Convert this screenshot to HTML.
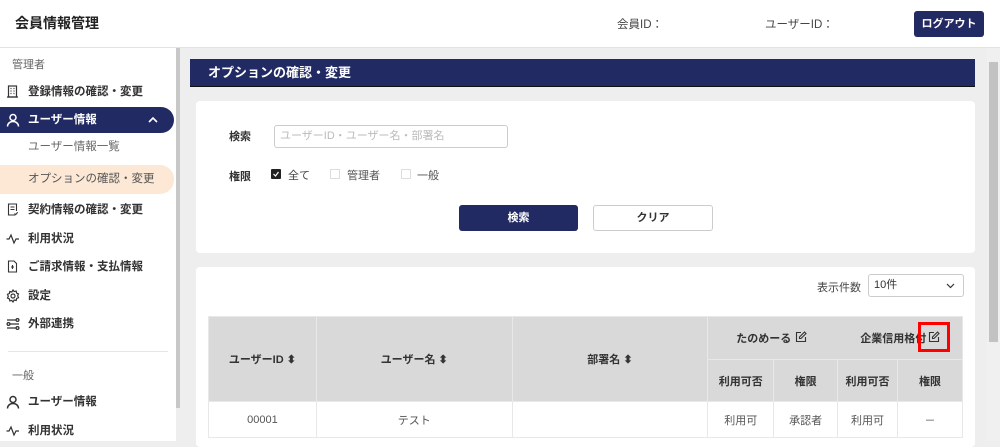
<!DOCTYPE html>
<html><head><meta charset="utf-8"><style>
*{box-sizing:border-box;margin:0;padding:0}
body{width:1000px;height:441px;overflow:hidden;background:#eeeeee;font-family:"Liberation Sans","Noto Sans CJK JP",sans-serif;color:#333;position:relative}
.abs{position:absolute}
.hdr{left:0;top:0;width:1000px;height:48px;background:#fff;border-bottom:1px solid #e2e2e2}
.side{left:0;top:48px;width:176px;height:393px;background:#fff}
.sb{left:176px;top:48px;width:4px;height:360px;background:#c8c8c8}
.it{position:absolute;left:0;width:174px;height:26px;font-size:11.5px;font-weight:bold;line-height:26px;padding-left:28px;color:#333}
.it svg{position:absolute;left:6px;top:6px}
.sub{font-weight:normal;color:#666;padding-left:28px}
.lbl{position:absolute;left:12px;font-size:11px;color:#666}
.card{background:#fff;border-radius:4px}
table{border-collapse:collapse;font-size:11px}
td,th{border:1px solid #e8e8e8;text-align:center}
th{background:#d9d9d9;font-weight:bold;color:#333}
td{color:#555;height:36px}
</style></head><body>
<div class="abs hdr">
<div class="abs" style="left:15px;top:13px;font-size:14px;font-weight:bold;color:#222">会員情報管理</div>
<div class="abs" style="left:617px;top:16px;font-size:11.5px;color:#444">会員ID：</div>
<div class="abs" style="left:765px;top:16px;font-size:11.5px;color:#444">ユーザーID：</div>
<div class="abs" style="left:914px;top:11px;width:70px;height:26px;background:#222a63;border-radius:3px;color:#fff;font-size:11px;font-weight:bold;text-align:center;line-height:26px">ログアウト</div>
</div>
<div class="abs side">
<div class="lbl" style="top:8px">管理者</div>
<div class="it" style="top:31px"><svg width="13" height="13" viewBox="0 0 13 13" fill="none" stroke="#333" stroke-width="1.2"><rect x="2.5" y="1" width="8" height="11"/><path d="M1 12h11M4.5 3.5h1M7.5 3.5h1M4.5 6h1M7.5 6h1M4.5 8.5h1M7.5 8.5h1"/></svg>登録情報の確認・変更</div>
<div class="it" style="top:59px;background:#222a63;color:#fff;border-radius:0 13px 13px 0"><svg width="14" height="14" viewBox="0 0 14 14" fill="none" stroke="#fff" stroke-width="1.5"><circle cx="7" cy="4.5" r="3"/><path d="M1.5 13.5c0-3 2.5-5 5.5-5s5.5 2 5.5 5"/></svg>ユーザー情報<svg style="left:148px;top:9px" width="10" height="8" viewBox="0 0 10 8" fill="none" stroke="#fff" stroke-width="1.6"><path d="M1 6l4-4 4 4"/></svg></div>
<div class="it sub" style="top:86px">ユーザー情報一覧</div>
<div class="it sub" style="top:117px;height:29px;line-height:29px;background:#fde8d5;border-radius:0 14px 14px 0;color:#555">オプションの確認・変更</div>
<div class="it" style="top:149px"><svg width="13" height="13" viewBox="0 0 13 13" fill="none" stroke="#333" stroke-width="1.1"><path d="M9 12H2.5V1h8v7"/><path d="M4.5 4h4M4.5 6.5h4M8.5 10.5l1.2 1.2 2-2.5"/></svg>契約情報の確認・変更</div>
<div class="it" style="top:178px"><svg width="14" height="13" viewBox="0 0 14 13" fill="none" stroke="#333" stroke-width="1.2"><path d="M0.5 7h2.5l2-4 3 8 2-4h3"/></svg>利用状況</div>
<div class="it" style="top:206px"><svg width="13" height="13" viewBox="0 0 13 13" fill="none" stroke="#333" stroke-width="1.1"><path d="M2.5 1h5.5l2.5 2.5V12h-8z"/><path d="M6.5 5v4M5 7h3"/></svg>ご請求情報・支払情報</div>
<div class="it" style="top:235px"><svg width="14" height="14" viewBox="0 0 14 14" fill="none" stroke="#333" stroke-width="1.2"><circle cx="7" cy="7" r="2"/><path d="M7 1l1.2 1.6 2-.5.4 2 1.9.8-.8 1.9.8 1.9-1.9.8-.4 2-2-.5L7 13l-1.2-1.6-2 .5-.4-2-1.9-.8.8-1.9-.8-1.9 1.9-.8.4-2 2 .5z"/></svg>設定</div>
<div class="it" style="top:263px"><svg width="14" height="14" viewBox="0 0 14 14" fill="none" stroke="#333" stroke-width="1.3"><path d="M1 3h9M4 7h9M1 11h9"/><circle cx="11.5" cy="3" r="1.4"/><circle cx="2.5" cy="7" r="1.4"/><circle cx="11.5" cy="11" r="1.4"/></svg>外部連携</div>
<div class="abs" style="left:8px;top:303px;width:160px;height:1px;background:#e6e6e6"></div>
<div class="lbl" style="top:319px">一般</div>
<div class="it" style="top:341px"><svg width="14" height="14" viewBox="0 0 14 14" fill="none" stroke="#333" stroke-width="1.5"><circle cx="7" cy="4.5" r="3"/><path d="M1.5 13.5c0-3 2.5-5 5.5-5s5.5 2 5.5 5"/></svg>ユーザー情報</div>
<div class="it" style="top:370px"><svg width="14" height="13" viewBox="0 0 14 13" fill="none" stroke="#333" stroke-width="1.2"><path d="M0.5 7h2.5l2-4 3 8 2-4h3"/></svg>利用状況</div>
</div>
<div class="abs sb"></div>
<div class="abs" style="left:987px;top:48px;width:13px;height:393px;background:#f0f0f0"></div>
<div class="abs" style="left:989px;top:62px;width:9px;height:280px;background:#c2c2c2"></div>
<div class="abs" style="left:190px;top:59px;width:785px;height:28px;background:#222a63;color:#fff;font-size:13px;font-weight:bold;line-height:28px;padding-left:18px;border-bottom:1px solid #111">オプションの確認・変更</div>
<div class="abs card" style="left:196px;top:101px;width:779px;height:152px">
<div class="abs" style="left:33px;top:27px;font-size:11px;font-weight:bold">検索</div>
<div class="abs" style="left:78px;top:24px;width:234px;height:23px;border:1px solid #ccc;border-radius:3px;font-size:11px;color:#bbb;line-height:21px;padding-left:5px">ユーザーID・ユーザー名・部署名</div>
<div class="abs" style="left:33px;top:67px;font-size:11px;font-weight:bold">権限</div>
<svg class="abs" style="left:75px;top:68px" width="10" height="10" viewBox="0 0 10 10"><rect width="10" height="10" rx="1" fill="#222"/><path d="M2.5 5l2 2 3-4" fill="none" stroke="#fff" stroke-width="1.2"/></svg>
<div class="abs" style="left:92px;top:66px;font-size:11px;color:#444">全て</div>
<div class="abs" style="left:134px;top:68px;width:10px;height:10px;border:1px solid #ddd"></div>
<div class="abs" style="left:151px;top:66px;font-size:11px;color:#555">管理者</div>
<div class="abs" style="left:205px;top:68px;width:10px;height:10px;border:1px solid #ddd"></div>
<div class="abs" style="left:221px;top:66px;font-size:11px;color:#555">一般</div>
<div class="abs" style="left:263px;top:104px;width:119px;height:26px;background:#222a63;border-radius:3px;color:#fff;font-size:11px;font-weight:bold;text-align:center;line-height:26px">検索</div>
<div class="abs" style="left:397px;top:104px;width:120px;height:26px;border:1px solid #ccc;border-radius:3px;font-size:11px;font-weight:bold;text-align:center;line-height:24px">クリア</div>
</div>
<div class="abs card" style="left:196px;top:267px;width:779px;height:180px">
<div class="abs" style="left:621px;top:12px;font-size:11px;color:#444">表示件数</div>
<div class="abs" style="left:672px;top:7px;width:96px;height:23px;border:1px solid #ccc;border-radius:3px;font-size:11px;line-height:20px;padding-left:5px">10件<svg style="position:absolute;right:8px;top:8px" width="9" height="6" viewBox="0 0 9 6" fill="none" stroke="#333" stroke-width="1.2"><path d="M1 1l3.5 3.5L8 1"/></svg></div>
<table class="abs" style="left:12px;top:49px;width:755px">
<tr style="height:43px"><th rowspan="2" style="width:108px">ユーザーID ⬍</th><th rowspan="2" style="width:196px">ユーザー名 ⬍</th><th rowspan="2" style="width:196px">部署名 ⬍</th><th colspan="4" style="position:relative">
<span style="position:absolute;left:28px;top:13px">たのめーる</span>
<svg style="position:absolute;left:87px;top:14px" width="12" height="12" viewBox="0 0 12 12" fill="none" stroke="#333" stroke-width="1.1"><path d="M6 1.5H1.5v9h9V6"/><path d="M9.5 1l1.5 1.5L6 7.5H4.5V6z"/></svg>
<span style="position:absolute;left:152px;top:13px">企業信用格付</span>
<svg style="position:absolute;left:220px;top:14px" width="12" height="12" viewBox="0 0 12 12" fill="none" stroke="#333" stroke-width="1.1"><path d="M6 1.5H1.5v9h9V6"/><path d="M9.5 1l1.5 1.5L6 7.5H4.5V6z"/></svg>
<span style="position:absolute;left:210px;top:5px;width:32px;height:30px;border:3px solid #f00"></span></th></tr>
<tr style="height:42px"><th style="width:66px">利用可否</th><th style="width:64px">権限</th><th style="width:60px">利用可否</th><th style="width:65px">権限</th></tr>
<tr><td>00001</td><td>テスト</td><td></td><td>利用可</td><td>承認者</td><td>利用可</td><td>－</td></tr>
</table>
</div>
</body></html>
